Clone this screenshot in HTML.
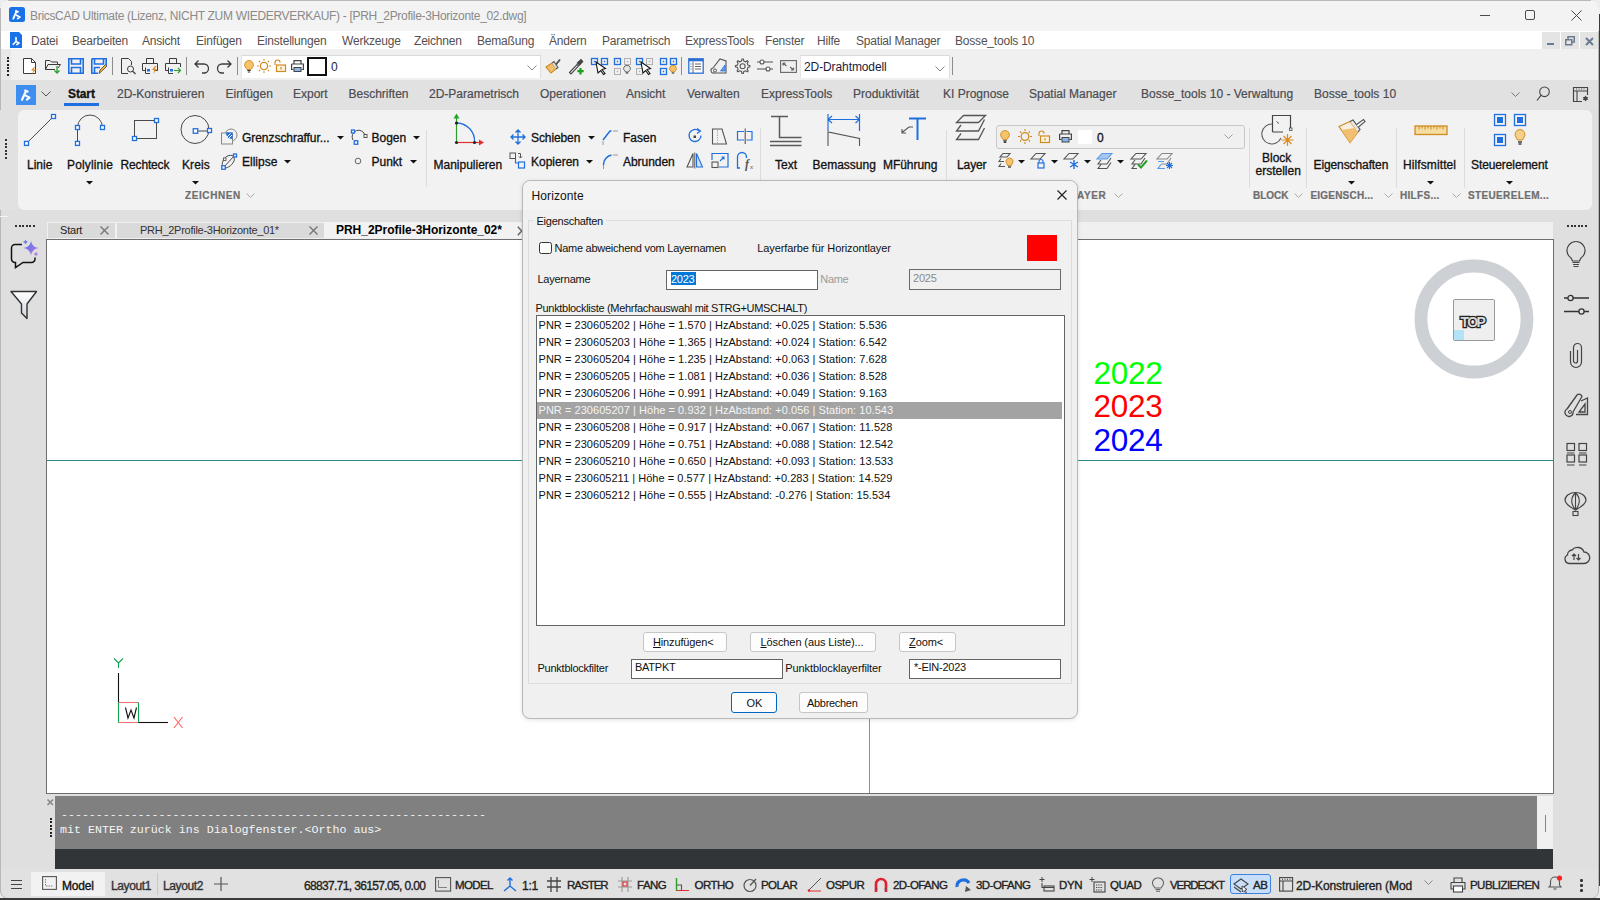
<!DOCTYPE html><html><head><meta charset="utf-8"><style>
html,body{margin:0;padding:0;width:1600px;height:900px;overflow:hidden;background:#ececec;}
body{position:relative;font-family:'Liberation Sans',sans-serif;}
.t{position:absolute;line-height:1;white-space:pre;}
.r{position:absolute;}
.s{position:absolute;overflow:visible;}
</style></head><body>
<div class="r" style="left:0px;top:0px;width:1599px;height:899px;background:#dfdfdf;border-radius:8px;overflow:hidden;border:1px solid #b8b8b8;box-sizing:border-box;"></div>
<div class="r" style="left:0px;top:0px;width:1599px;height:31px;background:#f3f3f3;border-radius:8px 8px 0 0;"></div>
<div class="r" style="left:8px;top:0px;width:1583px;height:1px;background:#b9b9b9;"></div>
<div class="r" style="left:1px;top:31px;width:1597px;height:18px;background:#ffffff;"></div>
<div class="r" style="left:1px;top:49px;width:1597px;height:31px;background:#f0f0f0;"></div>
<div class="r" style="left:1px;top:80px;width:1597px;height:30px;background:#e1e1e1;"></div>
<div class="r" style="left:18px;top:110px;width:1574px;height:100px;background:#f2f2f2;border-radius:6px;"></div>
<div class="r" style="left:1px;top:210px;width:1597px;height:659px;background:#dfdfdf;"></div>
<div class="r" style="left:46px;top:239px;width:1508px;height:555px;background:#ffffff;border:1px solid #6e6e6e;box-sizing:border-box;"></div>
<div class="r" style="left:55px;top:796px;width:1482px;height:53px;background:#808080;"></div>
<div class="r" style="left:1537px;top:796px;width:16px;height:53px;background:#f0f0f0;"></div>
<div class="r" style="left:55px;top:849px;width:1498px;height:20px;background:#323538;"></div>
<div class="r" style="left:1px;top:869px;width:1597px;height:29px;background:#e1e1e1;border-radius:0 0 8px 8px;"></div>
<div class="r" style="left:9px;top:7px;width:15.5px;height:15px;background:#1a72e8;border-radius:2.5px;"></div>
<svg class="s" style="left:9px;top:7px;" width="15" height="15" viewBox="0 0 15 15"><path d="M4.3 11.6 L7.6 4.2 M6.9 3.9 L8.9 4.8" fill="none" stroke="#fff" stroke-width="1.9" stroke-linecap="round"/><path d="M7.4 8.2 L10.9 10.1 L8.6 11.6" fill="none" stroke="#fff" stroke-width="1.7" stroke-linejoin="round" stroke-linecap="round"/></svg>
<div class="t" style="left:30px;top:9.8px;font-size:12px;color:#8a8a8a;letter-spacing:-0.31px;">BricsCAD Ultimate (Lizenz, NICHT ZUM WIEDERVERKAUF) - [PRH_2Profile-3Horizonte_02.dwg]</div>
<div class="r" style="left:1480px;top:15px;width:10px;height:1px;background:#4a4a4a;"></div>
<div class="r" style="left:1525px;top:10px;width:10px;height:10px;border:1px solid #4a4a4a;box-sizing:border-box;border-radius:2px;"></div>
<svg class="s" style="left:1571px;top:10px;" width="11" height="11" viewBox="0 0 11 11"><path d="M0.5 0.5 L10.5 10.5 M10.5 0.5 L0.5 10.5" stroke="#4a4a4a" stroke-width="1"/></svg>
<div class="r" style="left:1598.5px;top:14px;width:1.5px;height:872px;background:#3a3a3a;"></div>
<div class="r" style="left:0px;top:8px;width:1px;height:884px;background:#b8b8b8;"></div>
<div class="r" style="left:0px;top:898px;width:1600px;height:2px;background:#3a3a3a;"></div>
<svg class="s" style="left:10px;top:32px;" width="12" height="16" viewBox="0 0 12 16"><path d="M0 0 H9 L12 3 V16 H0 Z" fill="#1a72e8"/><path d="M6 5.5 V9.5 L3.3 12.3 M6 9.5 L9 11 L6.8 12.6" fill="none" stroke="#fff" stroke-width="1.6" stroke-linecap="round" stroke-linejoin="round"/></svg>
<div class="t" style="left:31px;top:34.8px;font-size:12px;color:#555050;letter-spacing:-0.2px;">Datei</div>
<div class="t" style="left:72px;top:34.8px;font-size:12px;color:#555050;letter-spacing:-0.2px;">Bearbeiten</div>
<div class="t" style="left:142px;top:34.8px;font-size:12px;color:#555050;letter-spacing:-0.2px;">Ansicht</div>
<div class="t" style="left:196px;top:34.8px;font-size:12px;color:#555050;letter-spacing:-0.2px;">Einfügen</div>
<div class="t" style="left:257px;top:34.8px;font-size:12px;color:#555050;letter-spacing:-0.2px;">Einstellungen</div>
<div class="t" style="left:342px;top:34.8px;font-size:12px;color:#555050;letter-spacing:-0.2px;">Werkzeuge</div>
<div class="t" style="left:414px;top:34.8px;font-size:12px;color:#555050;letter-spacing:-0.2px;">Zeichnen</div>
<div class="t" style="left:477px;top:34.8px;font-size:12px;color:#555050;letter-spacing:-0.2px;">Bemaßung</div>
<div class="t" style="left:549px;top:34.8px;font-size:12px;color:#555050;letter-spacing:-0.2px;">Ändern</div>
<div class="t" style="left:602px;top:34.8px;font-size:12px;color:#555050;letter-spacing:-0.2px;">Parametrisch</div>
<div class="t" style="left:685px;top:34.8px;font-size:12px;color:#555050;letter-spacing:-0.2px;">ExpressTools</div>
<div class="t" style="left:765px;top:34.8px;font-size:12px;color:#555050;letter-spacing:-0.2px;">Fenster</div>
<div class="t" style="left:817px;top:34.8px;font-size:12px;color:#555050;letter-spacing:-0.2px;">Hilfe</div>
<div class="t" style="left:856px;top:34.8px;font-size:12px;color:#555050;letter-spacing:-0.2px;">Spatial Manager</div>
<div class="t" style="left:955px;top:34.8px;font-size:12px;color:#555050;letter-spacing:-0.2px;">Bosse_tools 10</div>
<div class="r" style="left:1542px;top:32px;width:18px;height:17px;background:#e4e4e4;"></div>
<div class="r" style="left:1561px;top:32px;width:18px;height:17px;background:#e4e4e4;"></div>
<div class="r" style="left:1580px;top:32px;width:18px;height:17px;background:#e4e4e4;"></div>
<div class="r" style="left:1547px;top:43px;width:7px;height:2px;background:#6b7b92;"></div>
<svg class="s" style="left:1565px;top:36px;" width="10" height="10" viewBox="0 0 10 10"><rect x="0.75" y="3.75" width="6" height="5" fill="none" stroke="#6b7b92" stroke-width="1.5"/><path d="M3 3.5 V0.75 H9.25 V6 H7" fill="none" stroke="#6b7b92" stroke-width="1.5"/></svg>
<svg class="s" style="left:1585px;top:37px;" width="9" height="9" viewBox="0 0 9 9"><path d="M1 1 L8 8 M8 1 L1 8" stroke="#6b7b92" stroke-width="2"/></svg>
<div class="r" style="left:1px;top:49px;width:10px;height:31px;background:#e8e8e8;"></div>
<div class="r" style="left:7px;top:57.0px;width:2px;height:2px;background:#222;"></div>
<div class="r" style="left:7px;top:60.3px;width:2px;height:2px;background:#222;"></div>
<div class="r" style="left:7px;top:63.6px;width:2px;height:2px;background:#222;"></div>
<div class="r" style="left:7px;top:66.9px;width:2px;height:2px;background:#222;"></div>
<div class="r" style="left:7px;top:70.2px;width:2px;height:2px;background:#222;"></div>
<div class="r" style="left:7px;top:73.5px;width:2px;height:2px;background:#222;"></div>
<svg class="s" style="left:22px;top:58px;" width="16" height="16" viewBox="0 0 16 16"><path d="M1.5 0.5 H9.5 L13.5 4.5 V15.5 H1.5Z" fill="#fff" stroke="#3c3c3c"/><path d="M9.5 0.5 V4.5 H13.5" fill="none" stroke="#3c3c3c"/><path d="M12 9 L9 12.5 H11.5 L10 16 L14 11.5 H11.5 L13 9Z" fill="#e08a1e"/></svg>
<svg class="s" style="left:45px;top:58px;" width="16" height="16" viewBox="0 0 16 16"><path d="M0.5 2.5 H5 L6.5 4 H12.5 V6" fill="none" stroke="#3c3c3c"/><path d="M0.5 2.5 V11.5 H10" fill="none" stroke="#3c3c3c"/><path d="M0.5 11.5 L3 6.5 H15.5 L13 10" fill="none" stroke="#3c3c3c"/><path d="M12 8 V15 M9.5 12.5 L12 15 L14.5 12.5" fill="none" stroke="#2aa02a" stroke-width="1.3"/></svg>
<svg class="s" style="left:68px;top:58px;" width="16" height="16" viewBox="0 0 16 16"><path d="M0.8 0.8 H15.2 V15.2 H0.8Z M3.5 0.8 V6 H12.5 V0.8 M3.5 15.2 V9.5 H12.5 V15.2" fill="none" stroke="#1f6fe0" stroke-width="1.6"/></svg>
<svg class="s" style="left:91px;top:58px;" width="16" height="16" viewBox="0 0 16 16"><path d="M0.8 0.8 H15.2 V8 M0.8 0.8 V15.2 H7 M3.5 0.8 V6 H12.5 V0.8 M3.5 15.2 V9.5 H9" fill="none" stroke="#1f6fe0" stroke-width="1.6"/><path d="M8 15.5 L9 12 L14.5 6.5 L16 8 L10.5 13.5Z" fill="#f0b030" stroke="#444" stroke-width="0.8"/></svg>
<div class="r" style="left:112px;top:57px;width:1px;height:18px;background:#8c8c8c;"></div>
<svg class="s" style="left:120px;top:58px;" width="16" height="16" viewBox="0 0 16 16"><path d="M1.5 0.5 H8.5 L11.5 3.5 V7 M1.5 0.5 V15.5 H8" fill="none" stroke="#3c3c3c"/><circle cx="10.5" cy="11" r="3" fill="none" stroke="#3c3c3c"/><path d="M12.6 13.1 L15.5 16" stroke="#3c3c3c" stroke-width="1.3"/></svg>
<svg class="s" style="left:142px;top:58px;" width="16" height="16" viewBox="0 0 16 16"><path d="M4.5 5.5 V0.5 H11.5 V5.5 M0.5 5.5 H15.5 V12.5 H12.5 M0.5 5.5 V12.5 H3.5 M3.5 9.5 V15.5 H8" fill="none" stroke="#3c3c3c"/><rect x="5" y="11" width="3" height="2.5" fill="#1f6fe0"/><path d="M13 8 L10 12 H12.5 L11 16 L15 11 H12.5 L14.5 8Z" fill="#e08a1e"/></svg>
<svg class="s" style="left:165px;top:58px;" width="16" height="16" viewBox="0 0 16 16"><path d="M4.5 5.5 V0.5 H11.5 V5.5 M0.5 5.5 H15.5 V9 M0.5 5.5 V12.5 H3.5 M3.5 9.5 V15.5 H8" fill="none" stroke="#3c3c3c"/><rect x="5" y="11" width="3" height="2.5" fill="#1f6fe0"/><path d="M9 12.5 H15.5 M13 10 L15.5 12.5 L13 15" fill="none" stroke="#2aa02a" stroke-width="1.2"/></svg>
<div class="r" style="left:186px;top:57px;width:1px;height:18px;background:#8c8c8c;"></div>
<svg class="s" style="left:194px;top:59px;" width="16" height="14" viewBox="0 0 16 14"><path d="M1 5 H10 A4.5 4.5 0 0 1 10 14 H8 M4.5 1.5 L1 5 L4.5 8.5" fill="none" stroke="#3c3c3c" stroke-width="1.3"/></svg>
<svg class="s" style="left:216px;top:59px;" width="16" height="14" viewBox="0 0 16 14"><path d="M15 5 H6 A4.5 4.5 0 0 0 6 14 H8 M11.5 1.5 L15 5 L11.5 8.5" fill="none" stroke="#3c3c3c" stroke-width="1.3"/></svg>
<div class="r" style="left:237px;top:57px;width:1px;height:18px;background:#8c8c8c;"></div>
<div class="r" style="left:241px;top:55px;width:300px;height:23px;background:#ffffff;border-top:1px solid #dadada;border-left:1px solid #e5e5e5;box-sizing:border-box;"></div>
<svg class="s" style="left:244px;top:60px;" width="10" height="13" viewBox="0 0 10 13"><path d="M5 0.5 A4.3 4.3 0 0 1 8 8 L7 9.5 H3 L2 8 A4.3 4.3 0 0 1 5 0.5Z" fill="#f5c36a" stroke="#d08a20" stroke-width="0.9"/><path d="M3.3 10.5 H6.7 M3.8 12 H6.2" stroke="#333" stroke-width="1.2"/></svg>
<svg class="s" style="left:257px;top:59px;" width="14" height="14" viewBox="0 0 14 14"><circle cx="7" cy="7" r="3.6" fill="none" stroke="#d08a20" stroke-width="1.3"/><path d="M7 0 V1.8 M7 12.2 V14 M0 7 H1.8 M12.2 7 H14 M2 2 L3.2 3.2 M10.8 10.8 L12 12 M2 12 L3.2 10.8 M10.8 3.2 L12 2" stroke="#d08a20" stroke-width="1.1"/></svg>
<svg class="s" style="left:274px;top:59px;" width="12" height="13" viewBox="0 0 12 13"><path d="M1 6 V3.5 A2.5 2.5 0 0 1 6 3.5 V2" fill="none" stroke="#d08a20" stroke-width="1.1"/><rect x="2.5" y="6" width="9" height="6.5" fill="#fdf3df" stroke="#d08a20" stroke-width="1.2"/><path d="M7 8 V10.5" stroke="#d08a20" stroke-width="1.2"/></svg>
<svg class="s" style="left:291px;top:60px;" width="13" height="12" viewBox="0 0 13 12"><path d="M3 4 V0.6 H10 V4 M0.6 4 H12.4 V9.5 H10.5 M0.6 4 V9.5 H2.5" fill="none" stroke="#444" stroke-width="1.2"/><rect x="3" y="7.5" width="7" height="4" fill="#8ab4e8" stroke="#444" stroke-width="1"/></svg>
<div class="r" style="left:307px;top:57px;width:20px;height:19px;background:#fff;border:2px solid #111;box-sizing:border-box;"></div>
<div class="t" style="left:331px;top:60.8px;font-size:12px;color:#1b1b50;">0</div>
<svg class="s" style="left:527px;top:65px;" width="10" height="6" viewBox="0 0 10 6"><path d="M0.5 0.5 L5 5 L9.5 0.5" fill="none" stroke="#888" stroke-width="1"/></svg>
<div class="r" style="left:540px;top:55px;width:1px;height:23px;background:#dedede;"></div>
<svg class="s" style="left:545px;top:58px;" width="17" height="16" viewBox="0 0 17 16"><path d="M1 9 L7 5 L11 11 L6 15Z" fill="#f0c070" stroke="#d08a20" stroke-width="1.1"/><path d="M7 5 L9 3.5 L13 9.5 L11 11" fill="#ddd" stroke="#555" stroke-width="1.1"/><path d="M11 6.5 L15 1.5" stroke="#555" stroke-width="2"/></svg>
<svg class="s" style="left:568px;top:58px;" width="16" height="17" viewBox="0 0 16 17"><path d="M1.5 14.5 L9 6.5 L10.5 8 L3 16Z" fill="#fff" stroke="#444" stroke-width="1.1"/><path d="M8.5 5 L13 0.8 L15.5 3.5 L11.5 8Z" fill="#444"/><path d="M12.5 10 V16.5 M9.3 13.2 H15.7" stroke="#1aa01a" stroke-width="2.2"/></svg>
<svg class="s" style="left:591px;top:58px;" width="17" height="17" viewBox="0 0 17 17"><rect x="0.5" y="0.5" width="6" height="6" fill="none" stroke="#1f6fe0" stroke-width="1.3"/><rect x="2.8" y="2.8" width="1.4" height="1.4" fill="#1f6fe0"/><rect x="10.5" y="0.5" width="6" height="6" fill="none" stroke="#1f6fe0" stroke-width="1.3"/><rect x="12.8" y="2.8" width="1.4" height="1.4" fill="#1f6fe0"/><path d="M5 4 L14.5 10.5 L11 11.5 L14 15.5 L12.5 16.5 L9.7 12.5 L7 15Z" fill="#fff" stroke="#111" stroke-width="1.1"/></svg>
<svg class="s" style="left:614px;top:58px;" width="17" height="17" viewBox="0 0 17 17"><rect x="0.5" y="0.5" width="6" height="6" fill="none" stroke="#1f6fe0" stroke-width="1.3"/><rect x="2.8" y="2.8" width="1.4" height="1.4" fill="#1f6fe0"/><rect x="10.5" y="0.5" width="6" height="6" fill="none" stroke="#b0b0b0" stroke-width="1"/><rect x="12.8" y="2.8" width="1.4" height="1.4" fill="#b0b0b0"/><rect x="0.5" y="10.5" width="6" height="6" fill="none" stroke="#b0b0b0" stroke-width="1"/><rect x="2.8" y="12.8" width="1.4" height="1.4" fill="#b0b0b0"/><path d="M13 7.5 A3 3 0 0 1 15 13 L14.5 14 H11.5 L11 13 A3 3 0 0 1 13 7.5Z" fill="#e8e8e8" stroke="#555" stroke-width="0.9"/><path d="M11.8 15 H14.2" stroke="#444" stroke-width="1.2"/></svg>
<svg class="s" style="left:636px;top:58px;" width="17" height="17" viewBox="0 0 17 17"><rect x="0.5" y="0.5" width="6" height="6" fill="none" stroke="#1f6fe0" stroke-width="1.3"/><rect x="2.8" y="2.8" width="1.4" height="1.4" fill="#1f6fe0"/><rect x="10.5" y="0.5" width="6" height="6" fill="none" stroke="#b0b0b0" stroke-width="1"/><rect x="12.8" y="2.8" width="1.4" height="1.4" fill="#b0b0b0"/><rect x="0.5" y="10.5" width="6" height="6" fill="none" stroke="#b0b0b0" stroke-width="1"/><rect x="2.8" y="12.8" width="1.4" height="1.4" fill="#b0b0b0"/><path d="M5 4 L14.5 10.5 L11 11.5 L14 15.5 L12.5 16.5 L9.7 12.5 L7 15Z" fill="#fff" stroke="#111" stroke-width="1.1"/></svg>
<svg class="s" style="left:660px;top:58px;" width="17" height="17" viewBox="0 0 17 17"><rect x="0.5" y="0.5" width="6" height="6" fill="none" stroke="#1f6fe0" stroke-width="1.3"/><rect x="2.8" y="2.8" width="1.4" height="1.4" fill="#1f6fe0"/><rect x="10.5" y="0.5" width="6" height="6" fill="none" stroke="#1f6fe0" stroke-width="1.3"/><rect x="12.8" y="2.8" width="1.4" height="1.4" fill="#1f6fe0"/><rect x="0.5" y="10.5" width="6" height="6" fill="none" stroke="#1f6fe0" stroke-width="1.3"/><rect x="2.8" y="12.8" width="1.4" height="1.4" fill="#1f6fe0"/><path d="M13 7.5 A3 3 0 0 1 15 13 L14.5 14 H11.5 L11 13 A3 3 0 0 1 13 7.5Z" fill="#f5c36a" stroke="#d08a20" stroke-width="0.9"/><path d="M11.8 15 H14.2" stroke="#444" stroke-width="1.2"/></svg>
<div class="r" style="left:681px;top:57px;width:1px;height:18px;background:#8c8c8c;"></div>
<svg class="s" style="left:688px;top:58px;" width="16" height="16" viewBox="0 0 16 16"><rect x="0.8" y="0.8" width="14.4" height="14.4" fill="#fff" stroke="#2b6fd6" stroke-width="1.3"/><rect x="0.8" y="0.8" width="14.4" height="2.5" fill="#2b6fd6"/><path d="M5 3.5 V15 M7 6 H13 M7 8.5 H13 M7 11 H13" stroke="#555" stroke-width="0.9"/><path d="M2.5 6 H3.5 M2.5 8.5 H3.5 M2.5 11 H3.5" stroke="#2b6fd6" stroke-width="1"/></svg>
<svg class="s" style="left:711px;top:58px;" width="17" height="16" viewBox="0 0 17 16"><path d="M2 10 L9 1 L15 3 V15 H3 A2.5 2.5 0 0 1 2 10Z" fill="none" stroke="#555" stroke-width="1.1"/><path d="M14 7 L9.5 13 H14Z" fill="#6aa0e8" stroke="#1f6fe0" stroke-width="0.8"/><circle cx="4" cy="12.5" r="1.5" fill="none" stroke="#555"/></svg>
<svg class="s" style="left:734px;top:58px;" width="16" height="16" viewBox="0 0 16 16"><path d="M8 1 L9.3 1 L9.8 3 L11.5 3.8 L13.3 2.7 L14.2 3.6 L13.2 5.4 L13.9 7.1 L15.9 7.6 V8.9 L13.9 9.4 L13.2 11.1 L14.2 12.9 L13.3 13.8 L11.5 12.8 L9.8 13.5 L9.3 15.5 H8 L7.5 13.5 L5.8 12.8 L4 13.8 L3.1 12.9 L4.1 11.1 L3.4 9.4 L1.4 8.9 V7.6 L3.4 7.1 L4.1 5.4 L3.1 3.6 L4 2.7 L5.8 3.8 L7.5 3Z" fill="none" stroke="#555" stroke-width="1.1"/><circle cx="8.6" cy="8.3" r="2.5" fill="none" stroke="#555" stroke-width="1.1"/></svg>
<svg class="s" style="left:757px;top:59px;" width="16" height="14" viewBox="0 0 16 14"><path d="M0 3 H16 M0 10 H16" stroke="#555" stroke-width="1.1"/><circle cx="5" cy="3" r="2" fill="#fff" stroke="#555" stroke-width="1.1"/><circle cx="11" cy="10" r="2" fill="#fff" stroke="#555" stroke-width="1.1"/></svg>
<svg class="s" style="left:780px;top:60px;" width="17" height="13" viewBox="0 0 17 13"><rect x="0.6" y="0.6" width="15.8" height="11.8" fill="none" stroke="#666" stroke-width="1.1"/><path d="M3 3 L6.5 6 M3 3 H5.5 M3 3 V5.5 M13.5 10 L10 7 M13.5 10 H11 M13.5 10 V7.5" stroke="#666" stroke-width="1.2"/></svg>
<div class="r" style="left:800px;top:55px;width:150px;height:23px;background:#ffffff;border-top:1px solid #dadada;border-left:1px solid #e5e5e5;box-sizing:border-box;"></div>
<div class="t" style="left:804px;top:60.8px;font-size:12px;color:#1b1b3a;letter-spacing:-0.1px;">2D-Drahtmodell</div>
<svg class="s" style="left:935px;top:66px;" width="10" height="6" viewBox="0 0 10 6"><path d="M0.5 0.5 L5 5 L9.5 0.5" fill="none" stroke="#888" stroke-width="1"/></svg>
<div class="r" style="left:949px;top:55px;width:1px;height:23px;background:#dedede;"></div>
<div class="r" style="left:952px;top:57px;width:1px;height:18px;background:#8c8c8c;"></div>
<div class="r" style="left:16px;top:85px;width:20px;height:20px;background:#3d8ef0;"></div>
<svg class="s" style="left:16px;top:85px;" width="20" height="20" viewBox="0 0 20 20"><path d="M6 14.8 L10 6 M9.2 5.6 L11.6 6.6" fill="none" stroke="#fff" stroke-width="2.2" stroke-linecap="round"/><path d="M9.3 10.3 L13.6 12.6 L10.8 14.6" fill="none" stroke="#fff" stroke-width="2" stroke-linejoin="round" stroke-linecap="round"/></svg>
<svg class="s" style="left:41px;top:91px;" width="10" height="6" viewBox="0 0 10 6"><path d="M0.5 0.5 L5 5 L9.5 0.5" fill="none" stroke="#555" stroke-width="1"/></svg>
<div class="t" style="left:68px;top:87.8px;font-size:12px;color:#111;font-weight:bold;letter-spacing:-0.1px;-webkit-text-stroke:0.3px #111;">Start</div>
<div class="r" style="left:64px;top:103px;width:35px;height:2.5px;background:#1f6fe0;"></div>
<div class="t" style="left:117px;top:87.8px;font-size:12px;color:#4b4c52;-webkit-text-stroke:0.2px #4b4c52;">2D-Konstruieren</div>
<div class="t" style="left:225.5px;top:87.8px;font-size:12px;color:#4b4c52;-webkit-text-stroke:0.2px #4b4c52;">Einfügen</div>
<div class="t" style="left:293px;top:87.8px;font-size:12px;color:#4b4c52;-webkit-text-stroke:0.2px #4b4c52;">Export</div>
<div class="t" style="left:348.5px;top:87.8px;font-size:12px;color:#4b4c52;-webkit-text-stroke:0.2px #4b4c52;">Beschriften</div>
<div class="t" style="left:429px;top:87.8px;font-size:12px;color:#4b4c52;-webkit-text-stroke:0.2px #4b4c52;">2D-Parametrisch</div>
<div class="t" style="left:540px;top:87.8px;font-size:12px;color:#4b4c52;-webkit-text-stroke:0.2px #4b4c52;">Operationen</div>
<div class="t" style="left:626px;top:87.8px;font-size:12px;color:#4b4c52;-webkit-text-stroke:0.2px #4b4c52;">Ansicht</div>
<div class="t" style="left:687px;top:87.8px;font-size:12px;color:#4b4c52;-webkit-text-stroke:0.2px #4b4c52;">Verwalten</div>
<div class="t" style="left:761px;top:87.8px;font-size:12px;color:#4b4c52;-webkit-text-stroke:0.2px #4b4c52;">ExpressTools</div>
<div class="t" style="left:853px;top:87.8px;font-size:12px;color:#4b4c52;-webkit-text-stroke:0.2px #4b4c52;">Produktivität</div>
<div class="t" style="left:943px;top:87.8px;font-size:12px;color:#4b4c52;-webkit-text-stroke:0.2px #4b4c52;">KI Prognose</div>
<div class="t" style="left:1029px;top:87.8px;font-size:12px;color:#4b4c52;-webkit-text-stroke:0.2px #4b4c52;">Spatial Manager</div>
<div class="t" style="left:1141px;top:87.8px;font-size:12px;color:#4b4c52;-webkit-text-stroke:0.2px #4b4c52;">Bosse_tools 10 - Verwaltung</div>
<div class="t" style="left:1314px;top:87.8px;font-size:12px;color:#4b4c52;-webkit-text-stroke:0.2px #4b4c52;">Bosse_tools 10</div>
<svg class="s" style="left:1511px;top:92px;" width="9" height="5" viewBox="0 0 9 5"><path d="M0.5 0.5 L4.5 4.5 L8.5 0.5" fill="none" stroke="#777" stroke-width="1"/></svg>
<svg class="s" style="left:1536px;top:86px;" width="16" height="16" viewBox="0 0 16 16"><circle cx="8.5" cy="5.8" r="4.8" fill="none" stroke="#444" stroke-width="1.1"/><path d="M5.2 9.2 L1 14.5" stroke="#444" stroke-width="1.2"/></svg>
<svg class="s" style="left:1572px;top:86px;" width="18" height="17" viewBox="0 0 18 17"><path d="M10 15.5 H1.5 V1.5 H15.5 V9" fill="none" stroke="#444" stroke-width="1.2"/><path d="M1.5 5 H15.5 M5 5 V15.5" stroke="#444" stroke-width="1.1"/><path d="M4 3 H5 M6.5 3 H7.5 M9 3 H10 M11.5 3 H12.5" stroke="#444" stroke-width="1.2"/><path d="M13.5 9.5 L14.5 11 H16.2 L15.3 12.5 L16.2 14 H14.5 L13.5 15.5 L12.5 14 H10.8 L11.7 12.5 L10.8 11 H12.5Z" fill="#444"/></svg>
<svg class="s" style="left:20px;top:110px;" width="45" height="40" viewBox="0 0 45 40"><path d="M6.5 33.4 L33.5 6.5" stroke="#4a4a4a" stroke-width="1"/><rect x="4.5" y="31.4" width="4" height="4" fill="#fff" stroke="#1f6fe0" stroke-width="1.3"/><rect x="31.5" y="4.5" width="4" height="4" fill="#fff" stroke="#1f6fe0" stroke-width="1.3"/></svg>
<svg class="s" style="left:70px;top:110px;" width="40" height="40" viewBox="0 0 40 40"><path d="M7.5 33.4 V17.5 A12.5 12.5 0 0 1 32.5 17.5" fill="none" stroke="#4a4a4a" stroke-width="1"/><rect x="5.5" y="31.4" width="4" height="4" fill="#fff" stroke="#1f6fe0" stroke-width="1.3"/><rect x="5.5" y="15.5" width="4" height="4" fill="#fff" stroke="#1f6fe0" stroke-width="1.3"/><rect x="30.5" y="15.5" width="4" height="4" fill="#fff" stroke="#1f6fe0" stroke-width="1.3"/></svg>
<svg class="s" style="left:125px;top:110px;" width="40" height="40" viewBox="0 0 40 40"><rect x="9.5" y="10.5" width="22" height="18" fill="none" stroke="#4a4a4a" stroke-width="1"/><rect x="7.5" y="26.5" width="4" height="4" fill="#fff" stroke="#1f6fe0" stroke-width="1.3"/><rect x="29.5" y="8.5" width="4" height="4" fill="#fff" stroke="#1f6fe0" stroke-width="1.3"/></svg>
<svg class="s" style="left:175px;top:110px;" width="45" height="40" viewBox="0 0 45 40"><circle cx="20" cy="19.5" r="14" fill="none" stroke="#4a4a4a" stroke-width="1"/><path d="M20.5 21 H34.5" stroke="#4a4a4a"/><rect x="18.25" y="18.75" width="4.5" height="4.5" fill="#fff" stroke="#1f6fe0" stroke-width="1.3"/><rect x="32.5" y="18.5" width="4" height="4" fill="#fff" stroke="#1f6fe0" stroke-width="1.3"/></svg>
<div class="t" style="left:27px;top:158.8px;font-size:12px;color:#111;-webkit-text-stroke:0.3px #111;">Linie</div>
<div class="t" style="left:67px;top:158.8px;font-size:12px;color:#111;letter-spacing:0.15px;-webkit-text-stroke:0.3px #111;">Polylinie</div>
<div class="t" style="left:120.5px;top:158.8px;font-size:12px;color:#111;letter-spacing:-0.15px;-webkit-text-stroke:0.3px #111;">Rechteck</div>
<div class="t" style="left:182px;top:158.8px;font-size:12px;color:#111;letter-spacing:0.1px;-webkit-text-stroke:0.3px #111;">Kreis</div>
<svg class="s" style="left:86.0px;top:180.5px;" width="7" height="4" viewBox="0 0 7 4"><path d="M0 0 H7 L3.5 3.5Z" fill="#111"/></svg>
<svg class="s" style="left:192.0px;top:180.5px;" width="7" height="4" viewBox="0 0 7 4"><path d="M0 0 H7 L3.5 3.5Z" fill="#111"/></svg>
<div class="t" style="left:185px;top:190.5px;font-size:10px;color:#6e6e6e;font-weight:bold;letter-spacing:0.6px;-webkit-text-stroke:0.2px #6e6e6e;">ZEICHNEN</div>
<svg class="s" style="left:246px;top:193px;" width="9" height="5" viewBox="0 0 9 5"><path d="M0.5 0.5 L4.5 4.5 L8.5 0.5" fill="none" stroke="#aaa" stroke-width="1"/></svg>
<svg class="s" style="left:220px;top:128px;" width="18" height="18" viewBox="0 0 18 18"><circle cx="11" cy="7" r="6" fill="none" stroke="#888" stroke-width="1"/><rect x="1.5" y="5" width="11" height="11" fill="#f2f2f2" stroke="#888" stroke-width="1"/><path d="M6 4.5 H12.5 V11 A6 6 0 0 1 6 4.5Z" fill="#1f6fe0"/><path d="M7 9 L10.5 5.5 M8.5 10.5 L12 7" stroke="#fff" stroke-width="1"/></svg>
<div class="t" style="left:242px;top:131.8px;font-size:12px;color:#111;letter-spacing:-0.05px;-webkit-text-stroke:0.3px #111;">Grenzschraffur...</div>
<svg class="s" style="left:336.5px;top:135.5px;" width="7" height="4" viewBox="0 0 7 4"><path d="M0 0 H7 L3.5 3.5Z" fill="#111"/></svg>
<svg class="s" style="left:350px;top:128px;" width="18" height="18" viewBox="0 0 18 18"><path d="M3 12 A6.5 6.5 0 1 1 15 7.5" fill="none" stroke="#4a4a4a" stroke-width="1"/><rect x="1.5" y="2.0" width="3" height="3" fill="#fff" stroke="#1f6fe0" stroke-width="1.3"/><rect x="4.25" y="12.75" width="3.5" height="3.5" fill="#fff" stroke="#1f6fe0" stroke-width="1.3"/><rect x="14" y="6.5" width="3" height="3" fill="#fff" stroke="#555" stroke-width="1"/></svg>
<div class="t" style="left:371.5px;top:131.8px;font-size:12px;color:#111;-webkit-text-stroke:0.3px #111;">Bogen</div>
<svg class="s" style="left:412.5px;top:135.5px;" width="7" height="4" viewBox="0 0 7 4"><path d="M0 0 H7 L3.5 3.5Z" fill="#111"/></svg>
<svg class="s" style="left:220px;top:153px;" width="18" height="18" viewBox="0 0 18 18"><path d="M3 15 C1 11 3 4 9 2.5 C14 1.5 15 5 14 8 C12 13 6 16 3 15Z" fill="none" stroke="#4a4a4a" stroke-width="1"/><path d="M3 15 L15 2" stroke="#4a4a4a" stroke-width="1"/><rect x="1.75" y="12.75" width="3.5" height="3.5" fill="#fff" stroke="#1f6fe0" stroke-width="1.3"/><rect x="13.5" y="1.0" width="3" height="3" fill="#fff" stroke="#1f6fe0" stroke-width="1.3"/><rect x="3.5" y="5" width="2.5" height="2.5" fill="#fff" stroke="#555" stroke-width="0.9"/></svg>
<div class="t" style="left:242px;top:155.8px;font-size:12px;color:#111;-webkit-text-stroke:0.3px #111;">Ellipse</div>
<svg class="s" style="left:283.5px;top:159.5px;" width="7" height="4" viewBox="0 0 7 4"><path d="M0 0 H7 L3.5 3.5Z" fill="#111"/></svg>
<svg class="s" style="left:353px;top:156px;" width="10" height="10" viewBox="0 0 10 10"><circle cx="5" cy="5" r="2.8" fill="none" stroke="#666" stroke-width="1"/></svg>
<div class="t" style="left:371.5px;top:155.8px;font-size:12px;color:#111;-webkit-text-stroke:0.3px #111;">Punkt</div>
<svg class="s" style="left:409.5px;top:159.5px;" width="7" height="4" viewBox="0 0 7 4"><path d="M0 0 H7 L3.5 3.5Z" fill="#111"/></svg>
<div class="r" style="left:426px;top:130px;width:1px;height:57px;background:#dcdcdc;"></div>
<svg class="s" style="left:448px;top:112px;" width="40" height="36" viewBox="0 0 40 36"><path d="M8.5 4 V30.5" stroke="#2aa02a" stroke-width="1.2"/><path d="M5.5 6.5 L8.5 1.5 L11.5 6.5Z" fill="#2aa02a"/><path d="M8.5 30.5 H33" stroke="#e03030" stroke-width="1.2"/><path d="M31 27.5 L36 30.5 L31 33.5Z" fill="#e03030"/><path d="M8.5 11 A18 18 0 0 1 26.5 30.5" fill="none" stroke="#1f6fe0" stroke-width="1.3"/><circle cx="8.5" cy="11" r="1.6" fill="#222"/><circle cx="8.5" cy="30.5" r="1.6" fill="#222"/><circle cx="26.5" cy="30.5" r="1.6" fill="#222"/></svg>
<div class="t" style="left:433.5px;top:158.8px;font-size:12px;color:#111;-webkit-text-stroke:0.3px #111;">Manipulieren</div>
<svg class="s" style="left:510px;top:129px;" width="16" height="16" viewBox="0 0 16 16"><path d="M8 1 V15 M1 8 H15 M5.5 3.5 L8 1 L10.5 3.5 M5.5 12.5 L8 15 L10.5 12.5 M3.5 5.5 L1 8 L3.5 10.5 M12.5 5.5 L15 8 L12.5 10.5" fill="none" stroke="#1f6fe0" stroke-width="1.3"/></svg>
<div class="t" style="left:531px;top:131.8px;font-size:12px;color:#111;letter-spacing:-0.1px;-webkit-text-stroke:0.3px #111;">Schieben</div>
<svg class="s" style="left:587.5px;top:135.5px;" width="7" height="4" viewBox="0 0 7 4"><path d="M0 0 H7 L3.5 3.5Z" fill="#111"/></svg>
<svg class="s" style="left:509px;top:152px;" width="17" height="17" viewBox="0 0 17 17"><rect x="1" y="1" width="5.5" height="5.5" fill="none" stroke="#555" stroke-width="1"/><path d="M9 1.5 H11.5 V6 M10 4.5 L11.5 6 L13 4.5" fill="none" stroke="#555"/><path d="M6.5 7 V11 H10" fill="none" stroke="#1f6fe0" stroke-width="1.1"/><rect x="9.5" y="10" width="6" height="6" fill="none" stroke="#1f6fe0" stroke-width="1.2"/></svg>
<div class="t" style="left:531px;top:155.8px;font-size:12px;color:#111;-webkit-text-stroke:0.3px #111;">Kopieren</div>
<svg class="s" style="left:585.5px;top:159.5px;" width="7" height="4" viewBox="0 0 7 4"><path d="M0 0 H7 L3.5 3.5Z" fill="#111"/></svg>
<svg class="s" style="left:601px;top:127px;" width="18" height="19" viewBox="0 0 18 19"><path d="M2 13 L9 4 H10.5" fill="none" stroke="#1f6fe0" stroke-width="1.5"/><path d="M12 4 H17 M2 14 V18" stroke="#999" stroke-width="1"/></svg>
<div class="t" style="left:623px;top:131.8px;font-size:12px;color:#111;-webkit-text-stroke:0.3px #111;">Fasen</div>
<svg class="s" style="left:601px;top:151px;" width="18" height="19" viewBox="0 0 18 19"><path d="M2.5 14 A10 10 0 0 1 10.5 4" fill="none" stroke="#1f6fe0" stroke-width="1.5"/><path d="M12 4 H17 M2.5 14 V18" stroke="#999" stroke-width="1"/></svg>
<div class="t" style="left:623px;top:155.8px;font-size:12px;color:#111;letter-spacing:-0.05px;-webkit-text-stroke:0.3px #111;">Abrunden</div>
<svg class="s" style="left:687px;top:128px;" width="16" height="16" viewBox="0 0 16 16"><path d="M12 3 A6 6 0 1 0 14 7.5" fill="none" stroke="#1f6fe0" stroke-width="1.3"/><path d="M10 0.5 L13.5 3 L10 5.5" fill="none" stroke="#1f6fe0" stroke-width="1.2"/><rect x="6.5" y="7.5" width="2.5" height="2.5" fill="#444"/></svg>
<svg class="s" style="left:711px;top:128px;" width="18" height="17" viewBox="0 0 18 17"><path d="M1.5 1 V16 H15.5 L11 1Z" fill="none" stroke="#555" stroke-width="1.1"/><path d="M6.5 2 V15" stroke="#999" stroke-dasharray="1.2 1.2" stroke-width="0.9"/></svg>
<svg class="s" style="left:736px;top:128px;" width="18" height="17" viewBox="0 0 18 17"><path d="M8 3.5 H1.5 V12 H8 M10.5 3.5 H16 V12 H10.5" fill="none" stroke="#1f6fe0" stroke-width="1.2"/><path d="M9.2 0.5 V16" stroke="#555" stroke-width="1.1"/></svg>
<svg class="s" style="left:686px;top:152px;" width="18" height="17" viewBox="0 0 18 17"><path d="M7 1.5 L1 15 H7Z" fill="none" stroke="#555" stroke-width="1.1"/><path d="M10.5 1.5 L16.5 15 H10.5Z" fill="#cfe0f8" stroke="#1f6fe0" stroke-width="1.1"/><path d="M8.8 0.5 V16.5" stroke="#555" stroke-width="1"/></svg>
<svg class="s" style="left:711px;top:152px;" width="18" height="17" viewBox="0 0 18 17"><path d="M1 8 V1.5 H17 V15 H8" fill="none" stroke="#1f6fe0" stroke-width="1.2"/><rect x="1" y="10" width="6" height="5.5" fill="none" stroke="#555" stroke-width="1.1"/><path d="M9 9 L13 5 M10.5 5 H13 V7.5" fill="none" stroke="#1f6fe0" stroke-width="1.1"/></svg>
<svg class="s" style="left:736px;top:151px;" width="19" height="19" viewBox="0 0 19 19"><path d="M4 17 H1.5 V6 A4.5 4.5 0 0 1 10.5 6 V7" fill="none" stroke="#1f6fe0" stroke-width="1.3"/><text x="9" y="17" font-family="Liberation Serif" font-style="italic" font-weight="bold" font-size="12" fill="#555">f</text><text x="14" y="18" font-family="Liberation Serif" font-style="italic" font-size="7" fill="#555">x</text></svg>
<div class="r" style="left:760px;top:128px;width:1px;height:60px;background:#dcdcdc;"></div>
<svg class="s" style="left:768px;top:113px;" width="36" height="36" viewBox="0 0 36 36"><path d="M3 3.5 H20 M11.5 3.5 V24.5 H33.5 M2 28.5 H33.5 M2 32.5 H33.5" fill="none" stroke="#5a5a5a" stroke-width="1.5"/></svg>
<div class="t" style="left:775px;top:158.8px;font-size:12px;color:#111;-webkit-text-stroke:0.3px #111;">Text</div>
<svg class="s" style="left:825px;top:112px;" width="38" height="36" viewBox="0 0 38 36"><path d="M3 2 V19 M34.5 2 V19 M3 7.5 H34.5 M7 4 L3 7.5 L7 11 M30.5 4 L34.5 7.5 L30.5 11" fill="none" stroke="#1f6fe0" stroke-width="1.2"/><path d="M3 34 V20 L34.5 26.5 V34" fill="none" stroke="#555" stroke-width="1.1"/></svg>
<div class="t" style="left:812.5px;top:158.8px;font-size:12px;color:#111;-webkit-text-stroke:0.3px #111;">Bemassung</div>
<svg class="s" style="left:898px;top:116px;" width="32" height="26" viewBox="0 0 32 26"><path d="M11 2.5 H28 M19.5 2.5 V24" stroke="#1f6fe0" stroke-width="2"/><path d="M15 11 H11 L4 16.5 M4 13 V17 H8" fill="none" stroke="#555" stroke-width="1.1"/></svg>
<div class="t" style="left:883px;top:158.8px;font-size:12px;color:#111;letter-spacing:-0.05px;-webkit-text-stroke:0.3px #111;">MFührung</div>
<div class="r" style="left:946px;top:130px;width:1px;height:57px;background:#dcdcdc;"></div>
<svg class="s" style="left:954px;top:114px;" width="36" height="32" viewBox="0 0 36 32"><path d="M9.5 1.5 H31.5 L24.5 8.5 H2.5Z" fill="none" stroke="#555" stroke-width="1.3"/><path d="M30.5 5.5 L24.5 17 H2.5 L7 11" fill="none" stroke="#555" stroke-width="1.3"/><path d="M30.5 14 L24.5 25.5 H2.5 L7 19.5" fill="none" stroke="#555" stroke-width="1.3"/></svg>
<div class="t" style="left:957px;top:158.8px;font-size:12px;color:#111;letter-spacing:-0.1px;-webkit-text-stroke:0.3px #111;">Layer</div>
<div class="r" style="left:995.5px;top:124.5px;width:249.5px;height:24px;background:#f0f0f0;border:1px solid #c8c8c8;box-sizing:border-box;border-radius:3px;"></div>
<svg class="s" style="left:1000px;top:130px;" width="10" height="14" viewBox="0 0 10 14"><path d="M5 0.5 A4.3 4.3 0 0 1 8 8 L7 9.5 H3 L2 8 A4.3 4.3 0 0 1 5 0.5Z" fill="#f5c36a" stroke="#d08a20" stroke-width="0.9"/><path d="M3.3 10.8 H6.7 M3.8 12.3 H6.2" stroke="#333" stroke-width="1.2"/></svg>
<svg class="s" style="left:1018px;top:129px;" width="14" height="15" viewBox="0 0 14 15"><circle cx="7" cy="7.5" r="3.8" fill="none" stroke="#d08a20" stroke-width="1.3"/><path d="M7 0 V2 M7 13 V15 M0 7.5 H2 M12 7.5 H14 M2 2.5 L3.3 3.8 M10.7 11.2 L12 12.5 M2 12.5 L3.3 11.2 M10.7 3.8 L12 2.5" stroke="#d08a20" stroke-width="1.1"/></svg>
<svg class="s" style="left:1038px;top:130px;" width="12" height="13" viewBox="0 0 12 13"><path d="M1 6 V3.5 A2.5 2.5 0 0 1 6 3.5 V2" fill="none" stroke="#d08a20" stroke-width="1.1"/><rect x="2.5" y="6" width="9" height="6.5" fill="#fdf3df" stroke="#d08a20" stroke-width="1.2"/><path d="M7 8 V10.5" stroke="#d08a20" stroke-width="1.2"/></svg>
<svg class="s" style="left:1059px;top:130px;" width="13" height="13" viewBox="0 0 13 13"><path d="M3 4 V0.6 H10 V4 M0.6 4 H12.4 V9.5 H10.5 M0.6 4 V9.5 H2.5" fill="none" stroke="#444" stroke-width="1.2"/><rect x="3" y="7.5" width="7" height="4.5" fill="#8ab4e8" stroke="#444" stroke-width="1"/></svg>
<div class="r" style="left:1078px;top:130px;width:14px;height:14px;background:#ffffff;"></div>
<div class="t" style="left:1097px;top:131.8px;font-size:12px;color:#111;-webkit-text-stroke:0.3px #111;">0</div>
<svg class="s" style="left:1224px;top:134px;" width="9" height="5" viewBox="0 0 9 5"><path d="M0.5 0.5 L4.5 4.5 L8.5 0.5" fill="none" stroke="#999" stroke-width="1"/></svg>
<svg class="s" style="left:997px;top:152px;" width="22" height="18" viewBox="0 0 22 18"><path d="M6 1.5 H13 L10 5 H3Z M4 6.5 L2 9.5 H7 M4 11.5 L2 14.5 H8" fill="none" stroke="#555" stroke-width="1.1"/><path d="M12.5 6 A3.5 3.5 0 0 1 15 12 L14.5 13.5 H10.5 L10 12 A3.5 3.5 0 0 1 12.5 6Z" fill="#f5c36a" stroke="#d08a20" stroke-width="0.9"/><path d="M11 15 H14" stroke="#333" stroke-width="1.3"/></svg>
<svg class="s" style="left:1017.5px;top:159.5px;" width="7" height="4" viewBox="0 0 7 4"><path d="M0 0 H7 L3.5 3.5Z" fill="#111"/></svg>
<svg class="s" style="left:1030px;top:152px;" width="22" height="18" viewBox="0 0 22 18"><path d="M6 1.5 H15 L10 7 H1Z" fill="none" stroke="#555" stroke-width="1.1"/><path d="M9 11 V9.5 A2 2 0 0 1 13 9.5 V11" fill="none" stroke="#1f6fe0" stroke-width="1.1"/><rect x="8" y="11" width="6" height="5" fill="none" stroke="#1f6fe0" stroke-width="1.2"/></svg>
<svg class="s" style="left:1050.5px;top:159.5px;" width="7" height="4" viewBox="0 0 7 4"><path d="M0 0 H7 L3.5 3.5Z" fill="#111"/></svg>
<svg class="s" style="left:1063px;top:152px;" width="22" height="18" viewBox="0 0 22 18"><path d="M6 1.5 H15 L10 7 H1Z" fill="none" stroke="#555" stroke-width="1.1"/><path d="M11 8 V17 M7 10 L15 15 M15 10 L7 15" stroke="#1f6fe0" stroke-width="1.4"/></svg>
<svg class="s" style="left:1083.5px;top:159.5px;" width="7" height="4" viewBox="0 0 7 4"><path d="M0 0 H7 L3.5 3.5Z" fill="#111"/></svg>
<svg class="s" style="left:1096px;top:152px;" width="22" height="18" viewBox="0 0 22 18"><path d="M6 1.5 H16 L11 7 H1Z" fill="#a8c8f0" stroke="#5a9ae8" stroke-width="1.1"/><path d="M15 6 L11 12 H2 L5 8 M15 10.5 L11 16.5 H2 L5 12.5" fill="none" stroke="#555" stroke-width="1.1"/></svg>
<svg class="s" style="left:1116.5px;top:159.5px;" width="7" height="4" viewBox="0 0 7 4"><path d="M0 0 H7 L3.5 3.5Z" fill="#111"/></svg>
<svg class="s" style="left:1130px;top:152px;" width="22" height="18" viewBox="0 0 22 18"><path d="M6 1.5 H16 L11 7 H1Z M15 6 L11 12 H2 L5 8 M5 12.5 L2 16.5 H7" fill="none" stroke="#555" stroke-width="1.1"/><path d="M8 12.5 L11 15.5 L17 8.5" fill="none" stroke="#2aa02a" stroke-width="2"/></svg>
<svg class="s" style="left:1156px;top:152px;" width="22" height="18" viewBox="0 0 22 18"><path d="M6 1.5 H16 L11 7 H1Z M15 6 L11 12 H5" fill="none" stroke="#888" stroke-width="1.1"/><path d="M5 12.5 L2 16.5 H9 M2 9.5 H8" fill="none" stroke="#5a9ae8" stroke-width="1.2"/><path d="M13.5 10 V17 M10 13.5 H17 M11 11 L16 16 M16 11 L11 16" stroke="#1f6fe0" stroke-width="1.1"/></svg>
<div class="t" style="left:1077px;top:190.5px;font-size:10px;color:#6e6e6e;font-weight:bold;letter-spacing:0.6px;-webkit-text-stroke:0.2px #6e6e6e;">AYER</div>
<svg class="s" style="left:1114px;top:193px;" width="9" height="5" viewBox="0 0 9 5"><path d="M0.5 0.5 L4.5 4.5 L8.5 0.5" fill="none" stroke="#aaa" stroke-width="1"/></svg>
<div class="r" style="left:1249px;top:128px;width:1px;height:60px;background:#dcdcdc;"></div>
<svg class="s" style="left:1258px;top:113px;" width="36" height="36" viewBox="0 0 36 36"><path d="M14.5 11 A10 10 0 1 0 23 25" fill="none" stroke="#5a5a5a" stroke-width="1.1"/><path d="M14.5 19 V2.5 H32.5 V15 M14.5 19 H25" fill="none" stroke="#444" stroke-width="1.2"/><rect x="31.5" y="15" width="2.5" height="2.5" fill="#fff" stroke="#444" stroke-width="0.8"/><path d="M18.5 8.5 L21 10.5" stroke="#555" stroke-width="1"/><path d="M29.5 21 V33 M23.5 27 H35.5 M25.5 23 L33.5 31 M33.5 23 L25.5 31" stroke="#e08a1e" stroke-width="1.2"/></svg>
<div class="t" style="left:1262px;top:151.8px;font-size:12px;color:#111;-webkit-text-stroke:0.3px #111;">Block</div>
<div class="t" style="left:1255.5px;top:164.8px;font-size:12px;color:#111;-webkit-text-stroke:0.3px #111;">erstellen</div>
<div class="t" style="left:1253px;top:190.5px;font-size:10px;color:#6e6e6e;font-weight:bold;-webkit-text-stroke:0.2px #6e6e6e;">BLOCK</div>
<svg class="s" style="left:1294px;top:193px;" width="9" height="5" viewBox="0 0 9 5"><path d="M0.5 0.5 L4.5 4.5 L8.5 0.5" fill="none" stroke="#aaa" stroke-width="1"/></svg>
<div class="r" style="left:1306px;top:128px;width:1px;height:60px;background:#dcdcdc;"></div>
<svg class="s" style="left:1337px;top:118px;" width="30" height="27" viewBox="0 0 30 27"><path d="M2 8.5 L13 3.5 L21 14 L13 24.5Z" fill="#f8efe0" stroke="#d08a20" stroke-width="1.2"/><path d="M4.5 12 L17.5 10 L21 14 L13 24.5Z" fill="#f0c070"/><path d="M13 3.5 L16 2 L23 11.5 L21 14" fill="#e8e8e8" stroke="#555" stroke-width="1.2"/><path d="M19 7 L26.5 1.5 L28 3.5 L21.5 9" fill="#fff" stroke="#555" stroke-width="1.2"/></svg>
<div class="t" style="left:1313.5px;top:158.8px;font-size:12px;color:#111;letter-spacing:-0.1px;-webkit-text-stroke:0.3px #111;">Eigenschaften</div>
<svg class="s" style="left:1347.5px;top:180.5px;" width="7" height="4" viewBox="0 0 7 4"><path d="M0 0 H7 L3.5 3.5Z" fill="#111"/></svg>
<div class="t" style="left:1310.5px;top:190.5px;font-size:10px;color:#6e6e6e;font-weight:bold;letter-spacing:0.2px;-webkit-text-stroke:0.2px #6e6e6e;">EIGENSCH...</div>
<svg class="s" style="left:1384px;top:193px;" width="9" height="5" viewBox="0 0 9 5"><path d="M0.5 0.5 L4.5 4.5 L8.5 0.5" fill="none" stroke="#aaa" stroke-width="1"/></svg>
<div class="r" style="left:1396px;top:128px;width:1px;height:60px;background:#dcdcdc;"></div>
<svg class="s" style="left:1414px;top:125px;" width="34" height="11" viewBox="0 0 34 11"><rect x="1" y="1" width="32" height="8.5" fill="#f5dca0" stroke="#d08a20" stroke-width="1.3"/><path d="M5 1 V4.5 M8 1 V3.5 M11 1 V4.5 M14 1 V3.5 M17 1 V4.5 M20 1 V3.5 M23 1 V4.5 M26 1 V3.5 M29 1 V4.5" stroke="#d08a20" stroke-width="1"/></svg>
<div class="t" style="left:1403px;top:158.8px;font-size:12px;color:#111;letter-spacing:0.1px;-webkit-text-stroke:0.3px #111;">Hilfsmittel</div>
<svg class="s" style="left:1427.0px;top:180.5px;" width="7" height="4" viewBox="0 0 7 4"><path d="M0 0 H7 L3.5 3.5Z" fill="#111"/></svg>
<div class="t" style="left:1400px;top:190.5px;font-size:10px;color:#6e6e6e;font-weight:bold;letter-spacing:0.3px;-webkit-text-stroke:0.2px #6e6e6e;">HILFS...</div>
<svg class="s" style="left:1452px;top:193px;" width="9" height="5" viewBox="0 0 9 5"><path d="M0.5 0.5 L4.5 4.5 L8.5 0.5" fill="none" stroke="#aaa" stroke-width="1"/></svg>
<div class="r" style="left:1464px;top:128px;width:1px;height:60px;background:#dcdcdc;"></div>
<svg class="s" style="left:1492px;top:112px;" width="38" height="38" viewBox="0 0 38 38"><rect x="2.5" y="2.5" width="11" height="11" fill="none" stroke="#1f6fe0" stroke-width="1.3"/><rect x="5" y="5" width="6" height="6" fill="#1f6fe0"/><rect x="22.5" y="2.5" width="11" height="11" fill="none" stroke="#1f6fe0" stroke-width="1.3"/><rect x="25" y="25" width="0" height="0"/><rect x="25" y="5" width="6" height="6" fill="#1f6fe0"/><rect x="2.5" y="22.5" width="11" height="11" fill="none" stroke="#1f6fe0" stroke-width="1.3"/><rect x="5" y="25" width="6" height="6" fill="#1f6fe0"/><path d="M28 17.5 A5 5 0 0 1 31.5 26 L30.5 28 H25.5 L24.5 26 A5 5 0 0 1 28 17.5Z" fill="#f5d08a" stroke="#d08a20" stroke-width="1"/><path d="M26 30 H30 M26.5 32 H29.5" stroke="#444" stroke-width="1.4"/></svg>
<div class="t" style="left:1471px;top:158.8px;font-size:12px;color:#111;letter-spacing:-0.1px;-webkit-text-stroke:0.3px #111;">Steuerelement</div>
<svg class="s" style="left:1505.5px;top:180.5px;" width="7" height="4" viewBox="0 0 7 4"><path d="M0 0 H7 L3.5 3.5Z" fill="#111"/></svg>
<div class="t" style="left:1468px;top:190.5px;font-size:10px;color:#6e6e6e;font-weight:bold;letter-spacing:0.35px;-webkit-text-stroke:0.2px #6e6e6e;">STEUERELEM...</div>
<div class="r" style="left:0px;top:110px;width:18px;height:100px;background:#e1e1e1;"></div>
<div class="r" style="left:5px;top:139.0px;width:2px;height:2px;background:#333;"></div>
<div class="r" style="left:5px;top:142.5px;width:2px;height:2px;background:#333;"></div>
<div class="r" style="left:5px;top:146.0px;width:2px;height:2px;background:#333;"></div>
<div class="r" style="left:5px;top:149.5px;width:2px;height:2px;background:#333;"></div>
<div class="r" style="left:5px;top:153.0px;width:2px;height:2px;background:#333;"></div>
<div class="r" style="left:5px;top:156.5px;width:2px;height:2px;background:#333;"></div>
<div class="r" style="left:0px;top:216px;width:8px;height:1px;background:#f4f4f4;"></div>
<div class="r" style="left:47px;top:222px;width:1506px;height:17px;background:#f0f0f0;"></div>
<div class="r" style="left:48px;top:222.5px;width:67px;height:15.5px;background:#dadada;"></div>
<div class="t" style="left:60px;top:224.7px;font-size:11px;color:#222;letter-spacing:-0.2px;">Start</div>
<svg class="s" style="left:100px;top:226px;" width="9" height="9" viewBox="0 0 9 9"><path d="M0.5 0.5 L8.5 8.5 M8.5 0.5 L0.5 8.5" stroke="#777" stroke-width="1.4"/></svg>
<div class="r" style="left:117px;top:222.5px;width:207px;height:15.5px;background:#dadada;"></div>
<div class="t" style="left:140px;top:224.7px;font-size:11px;color:#333;letter-spacing:-0.27px;">PRH_2Profile-3Horizonte_01*</div>
<svg class="s" style="left:309px;top:226px;" width="9" height="9" viewBox="0 0 9 9"><path d="M0.5 0.5 L8.5 8.5 M8.5 0.5 L0.5 8.5" stroke="#777" stroke-width="1.4"/></svg>
<div class="r" style="left:324px;top:222.5px;width:210px;height:15.5px;background:#f2f2f2;"></div>
<div class="t" style="left:336px;top:224.3px;font-size:12px;color:#000;font-weight:bold;letter-spacing:-0.03px;">PRH_2Profile-3Horizonte_02*</div>
<svg class="s" style="left:517px;top:226px;" width="6" height="10" viewBox="0 0 6 10"><path d="M0.8 0.8 L4.8 5 L0.8 9.2" fill="none" stroke="#666" stroke-width="1.5"/></svg>
<div class="r" style="left:15.0px;top:225px;width:2px;height:2px;background:#333;"></div>
<div class="r" style="left:18.5px;top:225px;width:2px;height:2px;background:#333;"></div>
<div class="r" style="left:22.0px;top:225px;width:2px;height:2px;background:#333;"></div>
<div class="r" style="left:25.5px;top:225px;width:2px;height:2px;background:#333;"></div>
<div class="r" style="left:29.0px;top:225px;width:2px;height:2px;background:#333;"></div>
<div class="r" style="left:32.5px;top:225px;width:2px;height:2px;background:#333;"></div>
<svg class="s" style="left:10px;top:238px;" width="30" height="32" viewBox="0 0 30 32"><defs><linearGradient id="spk" x1="0" y1="0" x2="1" y2="1"><stop offset="0" stop-color="#4a7cf0"/><stop offset="1" stop-color="#c070e0"/></linearGradient></defs><path d="M12 6.5 H5 A3.5 3.5 0 0 0 1.5 10 V21 A3.5 3.5 0 0 0 5 24.5 H5.5 V29.5 L13 24.5 H21.5 A3.5 3.5 0 0 0 25 21 V19.5" fill="none" stroke="#111" stroke-width="1.5"/><path d="M21 3 Q22 9 28.5 10 Q22 11 21 17.5 Q20 11 13.5 10 Q20 9 21 3Z" fill="url(#spk)"/><path d="M15.5 1.5 Q15.9 3.4 18 3.9 Q15.9 4.4 15.5 6.5 Q15.1 4.4 13 3.9 Q15.1 3.4 15.5 1.5Z" fill="#6a80f0"/><path d="M26 13.5 Q26.4 15.5 28.5 16 Q26.4 16.5 26 18.5 Q25.6 16.5 23.5 16 Q25.6 15.5 26 13.5Z" fill="#b07ce0"/></svg>
<svg class="s" style="left:9px;top:289px;" width="30" height="32" viewBox="0 0 30 32"><defs><linearGradient id="flt" x1="0" y1="0" x2="0" y2="1"><stop offset="0" stop-color="#ffffff"/><stop offset="1" stop-color="#cfd5db"/></linearGradient></defs><path d="M2 2.5 H27.5 L18 15 V29.5 L12.5 24 V15Z" fill="url(#flt)" stroke="#333" stroke-width="1.4" stroke-linejoin="round"/></svg>
<div class="r" style="left:1567.0px;top:225px;width:2px;height:2px;background:#333;"></div>
<div class="r" style="left:1570.5px;top:225px;width:2px;height:2px;background:#333;"></div>
<div class="r" style="left:1574.0px;top:225px;width:2px;height:2px;background:#333;"></div>
<div class="r" style="left:1577.5px;top:225px;width:2px;height:2px;background:#333;"></div>
<div class="r" style="left:1581.0px;top:225px;width:2px;height:2px;background:#333;"></div>
<div class="r" style="left:1584.5px;top:225px;width:2px;height:2px;background:#333;"></div>
<svg class="s" style="left:1565px;top:242px;" width="22" height="26" viewBox="0 0 22 26"><path d="M6 16 A9 9 0 1 1 16 16 L14.5 19 H7.5Z" fill="none" stroke="#444" stroke-width="1.2"/><path d="M7.5 20.5 H14.5 M8 22.5 H14 M8.5 24.5 H13.5" stroke="#444" stroke-width="1.1"/></svg>
<svg class="s" style="left:1563px;top:293px;" width="27" height="22" viewBox="0 0 27 22"><path d="M1 5 H26 M1 18.5 H26" stroke="#333" stroke-width="1.4"/><circle cx="7.5" cy="5" r="2.6" fill="#e1e1e1" stroke="#333" stroke-width="1.3"/><circle cx="18.5" cy="18.5" r="2.6" fill="#e1e1e1" stroke="#333" stroke-width="1.3"/></svg>
<svg class="s" style="left:1569px;top:342px;" width="14" height="27" viewBox="0 0 14 27"><path d="M8.5 8 V19 A2 2 0 0 1 4.5 19 V5.5 A4 4 0 0 1 12.5 5.5 V20 A5.5 5.5 0 0 1 1.5 20 V9" fill="none" stroke="#444" stroke-width="1.2"/></svg>
<svg class="s" style="left:1564px;top:392px;" width="26" height="26" viewBox="0 0 26 26"><path d="M3 17 L13 3 A3 3 0 0 1 18 4.5 L9 20 M9 20 A4 4 0 1 1 3 17 M12 22.5 H23.5 V6 L17 9" fill="none" stroke="#444" stroke-width="1.3"/><path d="M21 12 V20 H15Z" fill="none" stroke="#444" stroke-width="1.3"/><circle cx="6" cy="20" r="1.5" fill="none" stroke="#444"/></svg>
<svg class="s" style="left:1565px;top:442px;" width="24" height="26" viewBox="0 0 24 26"><rect x="2" y="1.5" width="7.5" height="7" fill="none" stroke="#444" stroke-width="1.2"/><rect x="14" y="1.5" width="7.5" height="7" fill="none" stroke="#444" stroke-width="1.2"/><rect x="2" y="13" width="7.5" height="7" fill="none" stroke="#444" stroke-width="1.2"/><rect x="14" y="13" width="7.5" height="7" fill="none" stroke="#444" stroke-width="1.2"/><path d="M2 11 H9.5 M14 11 H21.5 M2 23 H9.5 M14 23 H21.5" stroke="#444" stroke-width="1.1"/></svg>
<svg class="s" style="left:1564px;top:492px;" width="24" height="26" viewBox="0 0 24 26"><path d="M11.5 18 C4 14 1 10 1 8 A10.5 7.5 0 0 1 22 8 C22 10 19 14 11.5 18 Z" fill="none" stroke="#444" stroke-width="1.2"/><path d="M11.5 18 C7 12 6 6 11.5 1 C17 6 16 12 11.5 18 M11.5 1 V18" fill="none" stroke="#444" stroke-width="1.1"/><rect x="9" y="19.5" width="5" height="4" fill="none" stroke="#444" stroke-width="1.1"/></svg>
<svg class="s" style="left:1563px;top:544px;" width="27" height="22" viewBox="0 0 27 22"><path d="M6 19.5 A4.5 4.5 0 0 1 4.5 11 A5 5 0 0 1 9 6 A7 7 0 0 1 21 8 A5.5 5.5 0 0 1 21 19.5Z" fill="none" stroke="#444" stroke-width="1.3"/><path d="M11 16 V10 M9 12 L11 10 L13 12 M15.5 10 V16 M13.5 14 L15.5 16 L17.5 14" fill="none" stroke="#444" stroke-width="1.2"/></svg>
<div class="r" style="left:47px;top:460px;width:1506px;height:1px;background:#2a8a8a;"></div>
<div class="r" style="left:869px;top:717px;width:1px;height:76px;background:#e8609a;"></div>
<div class="t" style="left:1093.5px;top:357.8px;font-size:31.5px;color:#00ff00;letter-spacing:-0.3px;">2022</div>
<div class="t" style="left:1093.5px;top:391.3px;font-size:31.5px;color:#ff0000;letter-spacing:-0.3px;">2023</div>
<div class="t" style="left:1093.5px;top:424.8px;font-size:31.5px;color:#0000ff;letter-spacing:-0.3px;">2024</div>
<svg class="s" style="left:105px;top:652px;" width="85" height="82" viewBox="0 0 85 82"><path d="M13.5 21 V50.5" stroke="#111" stroke-width="1.1"/><path d="M13.5 50.5 H33.5 M13.5 70.5 H33.5" stroke="#f07070" stroke-width="1.1"/><path d="M13.5 50.5 V70.5 M33.5 50.5 V70.5" stroke="#10a050" stroke-width="1.1"/><path d="M33.5 70.5 H63" stroke="#111" stroke-width="1.1"/><path d="M9 6.5 L13.5 11 L18 6.5 M13.5 11 V16" fill="none" stroke="#10a050" stroke-width="1.1"/><path d="M69 65 L77.5 76 M77.5 65 L69 76" stroke="#ff6060" stroke-width="1.1"/><path d="M20.5 55.5 L23 66 L26 58 L29 66 L31.5 55.5" fill="none" stroke="#111" stroke-width="1.1"/></svg>
<svg class="s" style="left:1413.7px;top:259.4px;" width="120" height="120" viewBox="0 0 120 120"><circle cx="60" cy="60" r="53" fill="none" stroke="#cdd0d4" stroke-width="12.8"/></svg>
<div class="r" style="left:1453px;top:299px;width:42px;height:42px;background:#efefef;border:1px solid #9a9a9a;box-sizing:border-box;border-radius:2px;"></div>
<div class="r" style="left:1454px;top:330px;width:10px;height:10px;background:#b4e2f6;"></div>
<div class="t" style="left:1460.5px;top:315.1px;font-size:14px;color:#d8d8d8;font-weight:bold;letter-spacing:-1.6px;-webkit-text-stroke:2.6px #222;paint-order:stroke fill;">TOP</div>
<svg class="s" style="left:47px;top:799px;" width="7" height="7" viewBox="0 0 7 7"><path d="M0.5 0.5 L6 6 M6 0.5 L0.5 6" stroke="#888" stroke-width="1.6"/></svg>
<div class="r" style="left:50px;top:818.0px;width:2px;height:2px;background:#222;"></div>
<div class="r" style="left:50px;top:821.4px;width:2px;height:2px;background:#222;"></div>
<div class="r" style="left:50px;top:824.8px;width:2px;height:2px;background:#222;"></div>
<div class="r" style="left:50px;top:828.2px;width:2px;height:2px;background:#222;"></div>
<div class="r" style="left:50px;top:831.6px;width:2px;height:2px;background:#222;"></div>
<div class="r" style="left:50px;top:835.0px;width:2px;height:2px;background:#222;"></div>
<div class="t" style="left:61px;top:809.1px;font-size:11.65px;color:#f2f2f2;letter-spacing:-0.02px;font-family:'Liberation Mono';">-------------------------------------------------------------</div>
<div class="t" style="left:60px;top:824.1px;font-size:11.65px;color:#f4f4f4;font-family:'Liberation Mono';">mit ENTER zurück ins Dialogfenster.&lt;Ortho aus&gt;</div>
<div class="r" style="left:1544.5px;top:815px;width:1.5px;height:17px;background:#858585;"></div>
<svg class="s" style="left:11px;top:879px;" width="11" height="11" viewBox="0 0 11 11"><path d="M0 1.5 H11 M0 5.5 H11 M0 9.5 H11" stroke="#444" stroke-width="1.1"/></svg>
<div class="r" style="left:31px;top:872px;width:74px;height:24px;background:#f2f2f2;"></div>
<svg class="s" style="left:42px;top:876px;" width="15" height="14" viewBox="0 0 15 14"><rect x="0.6" y="0.6" width="13.8" height="12.8" fill="none" stroke="#555" stroke-width="1.1"/><path d="M3.5 3 V10 H11" fill="none" stroke="#777" stroke-width="0.9" stroke-dasharray="1.5 1"/></svg>
<div class="t" style="left:62px;top:879.8px;font-size:12px;color:#111;letter-spacing:-0.2px;-webkit-text-stroke:0.35px #111;">Model</div>
<div class="t" style="left:111px;top:879.8px;font-size:12px;color:#333;letter-spacing:-0.4px;-webkit-text-stroke:0.35px #333;">Layout1</div>
<div class="r" style="left:157px;top:873px;width:1px;height:22px;background:#c8c8c8;"></div>
<div class="t" style="left:163px;top:879.8px;font-size:12px;color:#333;letter-spacing:-0.4px;-webkit-text-stroke:0.35px #333;">Layout2</div>
<svg class="s" style="left:214px;top:877px;" width="14" height="14" viewBox="0 0 14 14"><path d="M7 0 V14 M0 7 H14" stroke="#555" stroke-width="1.2"/></svg>
<div class="t" style="left:304px;top:879.8px;font-size:12px;color:#222;letter-spacing:-0.65px;-webkit-text-stroke:0.35px #222;">68837.71, 36157.05, 0.00</div>
<svg class="s" style="left:435px;top:877px;" width="16" height="16" viewBox="0 0 16 16"><rect x="0.6" y="0.6" width="15" height="13.5" fill="none" stroke="#555" stroke-width="1.1"/><path d="M3.5 3 V10.5 H12" fill="none" stroke="#777" stroke-width="0.9"/></svg>
<div class="t" style="left:455px;top:880.3px;font-size:11.5px;color:#222;letter-spacing:-0.6px;-webkit-text-stroke:0.35px #222;">MODEL</div>
<svg class="s" style="left:502px;top:877px;" width="16" height="16" viewBox="0 0 16 16"><path d="M8 1 V9 L2 14 M8 9 L14 14 M5.5 3.5 L8 1 L10.5 3.5" fill="none" stroke="#1f6fe0" stroke-width="1.4"/></svg>
<div class="t" style="left:522px;top:879.8px;font-size:12px;color:#222;letter-spacing:-0.2px;-webkit-text-stroke:0.35px #222;">1:1</div>
<svg class="s" style="left:547px;top:877px;" width="15" height="15" viewBox="0 0 15 15"><path d="M4 0 V15 M10 0 V15 M0 4 H14 M0 10 H14" stroke="#444" stroke-width="1.3"/></svg>
<div class="t" style="left:567px;top:880.3px;font-size:11.5px;color:#222;letter-spacing:-1.0px;-webkit-text-stroke:0.35px #222;">RASTER</div>
<svg class="s" style="left:618px;top:877px;" width="15" height="15" viewBox="0 0 15 15"><path d="M4 0 V15 M10 0 V15 M0 4 H14 M0 10 H14" stroke="#999" stroke-width="1.1"/><rect x="5" y="5" width="4" height="4" fill="none" stroke="#e02020" stroke-width="1"/></svg>
<div class="t" style="left:637px;top:880.3px;font-size:11.5px;color:#222;letter-spacing:-0.5px;-webkit-text-stroke:0.35px #222;">FANG</div>
<svg class="s" style="left:675px;top:877px;" width="16" height="16" viewBox="0 0 16 16"><path d="M1.5 1 V13.5 H14" fill="none" stroke="#e03030" stroke-width="1.2"/><path d="M1.5 1 V13.5" stroke="#2aa02a" stroke-width="1.2"/><path d="M1.5 8 H6.5 V13.5" fill="none" stroke="#555" stroke-width="1.1"/></svg>
<div class="t" style="left:694.5px;top:880.3px;font-size:11.5px;color:#222;letter-spacing:-0.55px;-webkit-text-stroke:0.35px #222;">ORTHO</div>
<svg class="s" style="left:743px;top:877px;" width="15" height="15" viewBox="0 0 15 15"><circle cx="7" cy="8.5" r="6" fill="none" stroke="#555" stroke-width="1.2"/><path d="M7 8.5 L13 2" stroke="#555" stroke-width="1.3"/></svg>
<div class="t" style="left:761px;top:880.3px;font-size:11.5px;color:#222;letter-spacing:-0.55px;-webkit-text-stroke:0.35px #222;">POLAR</div>
<svg class="s" style="left:807px;top:877px;" width="16" height="16" viewBox="0 0 16 16"><path d="M1.5 13.5 L14 1 M1 14 H14" stroke="#e03030" stroke-width="1"/><path d="M1.5 13.5 L14 1" stroke="#555" stroke-width="1"/><circle cx="2" cy="13.5" r="1.3" fill="#e03030"/></svg>
<div class="t" style="left:826px;top:880.3px;font-size:11.5px;color:#222;letter-spacing:-0.55px;-webkit-text-stroke:0.35px #222;">OSPUR</div>
<svg class="s" style="left:874px;top:877px;" width="14" height="16" viewBox="0 0 14 16"><path d="M2 15 V7 A5 5 0 0 1 12 7 V15" fill="none" stroke="#e02030" stroke-width="2.6"/><path d="M1 12 H3.5 M10.5 12 H13" stroke="#555" stroke-width="1.2"/></svg>
<div class="t" style="left:893px;top:880.3px;font-size:11.5px;color:#222;letter-spacing:-0.55px;-webkit-text-stroke:0.35px #222;">2D-OFANG</div>
<svg class="s" style="left:955px;top:877px;" width="17" height="16" viewBox="0 0 17 16"><path d="M2 10 A6.5 6.5 0 0 1 14 6" fill="none" stroke="#1f6fe0" stroke-width="3.2"/><path d="M11 9 L16 13 L10 15Z" fill="#555"/></svg>
<div class="t" style="left:976px;top:880.3px;font-size:11.5px;color:#222;letter-spacing:-0.55px;-webkit-text-stroke:0.35px #222;">3D-OFANG</div>
<svg class="s" style="left:1039px;top:877px;" width="16" height="16" viewBox="0 0 16 16"><path d="M3 0 V5 M0.5 2.5 H5.5" stroke="#444" stroke-width="1"/><path d="M3 6 V10.5 H15" fill="none" stroke="#444" stroke-width="1.1"/><rect x="5" y="9" width="10" height="5" fill="none" stroke="#444" stroke-width="1.1"/></svg>
<div class="t" style="left:1059px;top:880.3px;font-size:11.5px;color:#222;letter-spacing:-0.4px;-webkit-text-stroke:0.35px #222;">DYN</div>
<svg class="s" style="left:1089px;top:877px;" width="17" height="16" viewBox="0 0 17 16"><path d="M3 0 V5 M0.5 2.5 H5.5" stroke="#444" stroke-width="1"/><rect x="5" y="5" width="11" height="10" fill="none" stroke="#444" stroke-width="1.1"/><path d="M7 8 H14 M7 10.5 H14 M7 13 H14" stroke="#444" stroke-dasharray="1.3 1" stroke-width="1"/></svg>
<div class="t" style="left:1110px;top:880.3px;font-size:11.5px;color:#222;letter-spacing:-0.5px;-webkit-text-stroke:0.35px #222;">QUAD</div>
<svg class="s" style="left:1152px;top:877px;" width="12" height="16" viewBox="0 0 12 16"><path d="M6 1 A5 5 0 0 1 10 9.5 L9 11 H3 L2 9.5 A5 5 0 0 1 6 1Z" fill="none" stroke="#666" stroke-width="1.1"/><path d="M3.5 12.5 H8.5 M4 14.3 H8" stroke="#666" stroke-width="1.1"/></svg>
<div class="t" style="left:1170px;top:880.3px;font-size:11.5px;color:#222;letter-spacing:-1.1px;-webkit-text-stroke:0.35px #222;">VERDECKT</div>
<div class="r" style="left:1229.5px;top:874px;width:41.5px;height:20px;background:#c9def8;border:1px solid #3c82e0;box-sizing:border-box;border-radius:3px;"></div>
<svg class="s" style="left:1233px;top:878px;" width="16" height="16" viewBox="0 0 16 16"><path d="M1 6 L8 1 L15 6 L8 11Z M1 9 L8 14" fill="none" stroke="#444" stroke-width="1.1"/><path d="M9 8 L14 11.5 L12 12 L13.5 14.5 L12.5 15 L11 12.5 L9.5 14Z" fill="#fff" stroke="#333" stroke-width="0.8"/></svg>
<div class="t" style="left:1253px;top:880.3px;font-size:11.5px;color:#222;letter-spacing:-0.3px;-webkit-text-stroke:0.35px #222;">AB</div>
<svg class="s" style="left:1279px;top:877px;" width="15" height="15" viewBox="0 0 15 15"><rect x="0.6" y="0.6" width="13" height="13.5" fill="none" stroke="#444" stroke-width="1.1"/><path d="M0.6 4 H13.6 M4 4 V14" stroke="#444" stroke-width="1.1"/><path d="M3 2.3 H4 M5.5 2.3 H6.5 M8 2.3 H9 M10.5 2.3 H11.5" stroke="#444" stroke-width="1"/></svg>
<div class="t" style="left:1296px;top:879.8px;font-size:12px;color:#222;letter-spacing:-0.1px;-webkit-text-stroke:0.35px #222;">2D-Konstruieren (Mod</div>
<svg class="s" style="left:1424px;top:880px;" width="9" height="5" viewBox="0 0 9 5"><path d="M0.5 0.5 L4.5 4.5 L8.5 0.5" fill="none" stroke="#888" stroke-width="1"/></svg>
<svg class="s" style="left:1450px;top:877px;" width="16" height="16" viewBox="0 0 16 16"><path d="M4 5.5 V1 H12 V5.5 M1 5.5 H15 V12 H12.5 M1 5.5 V12 H3.5" fill="none" stroke="#444" stroke-width="1.1"/><rect x="3.5" y="9" width="9" height="6" fill="#fff" stroke="#444" stroke-width="1.1"/></svg>
<div class="t" style="left:1470px;top:880.3px;font-size:11.5px;color:#222;letter-spacing:-0.55px;-webkit-text-stroke:0.35px #222;">PUBLIZIEREN</div>
<svg class="s" style="left:1547px;top:875px;" width="16" height="16" viewBox="0 0 16 16"><path d="M2 12 H14 L12.5 10 V6.5 A4.5 4.5 0 0 0 3.5 6.5 V10Z" fill="none" stroke="#555" stroke-width="1.1"/><path d="M6.5 14 H9.5" stroke="#555" stroke-width="1.1"/><circle cx="12.5" cy="3" r="2.6" fill="#ff2020"/></svg>
<div class="r" style="left:1580px;top:879px;width:2.5px;height:2.5px;background:#333;border-radius:1.2px;"></div>
<div class="r" style="left:1580px;top:884px;width:2.5px;height:2.5px;background:#333;border-radius:1.2px;"></div>
<div class="r" style="left:1580px;top:889px;width:2.5px;height:2.5px;background:#333;border-radius:1.2px;"></div>
<div class="r" style="left:522px;top:180px;width:555.5px;height:539px;background:#f0f0f0;border:1px solid #b8b8b8;box-sizing:border-box;border-radius:8px;box-shadow:0 1px 4px rgba(0,0,0,0.12);"></div>
<div class="r" style="left:523px;top:181px;width:553.5px;height:29px;background:#f3f3f3;border-radius:8px 8px 0 0;"></div>
<div class="t" style="left:531.5px;top:189.8px;font-size:12px;color:#111;letter-spacing:0.1px;">Horizonte</div>
<svg class="s" style="left:1057px;top:190px;" width="10" height="10" viewBox="0 0 10 10"><path d="M0.5 0.5 L9.5 9.5 M9.5 0.5 L0.5 9.5" stroke="#222" stroke-width="1.2"/></svg>
<div class="r" style="left:528px;top:220px;width:543.5px;height:464px;border:1px solid #dcdcdc;box-sizing:border-box;"></div>
<div class="r" style="left:534px;top:214px;width:72px;height:10px;background:#f0f0f0;"></div>
<div class="t" style="left:536.5px;top:215.7px;font-size:11px;color:#111;letter-spacing:-0.25px;">Eigenschaften</div>
<div class="r" style="left:539px;top:241.5px;width:12.5px;height:12.5px;background:#fbfbfb;border:1px solid #333;box-sizing:border-box;border-radius:2.5px;"></div>
<div class="t" style="left:554.5px;top:242.7px;font-size:11px;color:#111;letter-spacing:-0.26px;">Name abweichend vom Layernamen</div>
<div class="t" style="left:757.3px;top:242.7px;font-size:11px;color:#111;letter-spacing:-0.1px;">Layerfarbe für Horizontlayer</div>
<div class="r" style="left:1027px;top:235px;width:30px;height:26px;background:#ff0000;"></div>
<div class="t" style="left:537.5px;top:274.2px;font-size:11px;color:#111;letter-spacing:-0.25px;">Layername</div>
<div class="r" style="left:666px;top:269.5px;width:151.5px;height:20.5px;background:#ffffff;border:1px solid #646464;box-sizing:border-box;"></div>
<div class="r" style="left:671px;top:272px;width:24.5px;height:12.5px;background:#0078d7;"></div>
<div class="t" style="left:671px;top:274.2px;font-size:11px;color:#ffffff;letter-spacing:-0.3px;">2023</div>
<div class="t" style="left:820.3px;top:273.7px;font-size:11px;color:#9a9a9a;letter-spacing:-0.3px;">Name</div>
<div class="r" style="left:909.2px;top:269.3px;width:151.5px;height:20.5px;background:#f0f0f0;border:1px solid #6a6a6a;box-sizing:border-box;"></div>
<div class="t" style="left:913px;top:273.2px;font-size:11px;color:#8a8a8a;letter-spacing:-0.2px;">2025</div>
<div class="t" style="left:535.5px;top:303.2px;font-size:11px;color:#111;letter-spacing:-0.31px;">Punktblockliste (Mehrfachauswahl mit STRG+UMSCHALT)</div>
<div class="r" style="left:536px;top:315px;width:528.5px;height:311px;background:#ffffff;border:1px solid #646464;box-sizing:border-box;"></div>
<div class="t" style="left:538.5px;top:320.2px;font-size:11px;color:#111;letter-spacing:0.04px;">PNR = 230605202 | Höhe = 1.570 | HzAbstand: +0.025 | Station: 5.536</div>
<div class="t" style="left:538.5px;top:337.2px;font-size:11px;color:#111;letter-spacing:0.04px;">PNR = 230605203 | Höhe = 1.365 | HzAbstand: +0.024 | Station: 6.542</div>
<div class="t" style="left:538.5px;top:354.2px;font-size:11px;color:#111;letter-spacing:0.04px;">PNR = 230605204 | Höhe = 1.235 | HzAbstand: +0.063 | Station: 7.628</div>
<div class="t" style="left:538.5px;top:371.2px;font-size:11px;color:#111;letter-spacing:0.04px;">PNR = 230605205 | Höhe = 1.081 | HzAbstand: +0.036 | Station: 8.528</div>
<div class="t" style="left:538.5px;top:388.2px;font-size:11px;color:#111;letter-spacing:0.04px;">PNR = 230605206 | Höhe = 0.991 | HzAbstand: +0.049 | Station: 9.163</div>
<div class="r" style="left:537px;top:402.0px;width:525px;height:16.5px;background:#a3a3a3;"></div>
<div class="t" style="left:538.5px;top:405.2px;font-size:11px;color:#f4f4f4;letter-spacing:0.04px;">PNR = 230605207 | Höhe = 0.932 | HzAbstand: +0.056 | Station: 10.543</div>
<div class="t" style="left:538.5px;top:422.2px;font-size:11px;color:#111;letter-spacing:0.04px;">PNR = 230605208 | Höhe = 0.917 | HzAbstand: +0.067 | Station: 11.528</div>
<div class="t" style="left:538.5px;top:439.2px;font-size:11px;color:#111;letter-spacing:0.04px;">PNR = 230605209 | Höhe = 0.751 | HzAbstand: +0.088 | Station: 12.542</div>
<div class="t" style="left:538.5px;top:456.2px;font-size:11px;color:#111;letter-spacing:0.04px;">PNR = 230605210 | Höhe = 0.650 | HzAbstand: +0.093 | Station: 13.533</div>
<div class="t" style="left:538.5px;top:473.2px;font-size:11px;color:#111;letter-spacing:0.04px;">PNR = 230605211 | Höhe = 0.577 | HzAbstand: +0.283 | Station: 14.529</div>
<div class="t" style="left:538.5px;top:490.2px;font-size:11px;color:#111;letter-spacing:0.04px;">PNR = 230605212 | Höhe = 0.555 | HzAbstand: -0.276 | Station: 15.534</div>
<div class="r" style="left:643.2px;top:631.5px;width:84px;height:20.5px;background:#fdfdfd;border:1px solid #c6c6c6;box-sizing:border-box;border-radius:3px;"></div>
<div class="t" style="left:653px;top:636.7px;font-size:11px;color:#111;letter-spacing:-0.15px;"><u>H</u>inzufügen&lt;</div>
<div class="r" style="left:750.3px;top:631.5px;width:126px;height:20.5px;background:#fdfdfd;border:1px solid #c6c6c6;box-sizing:border-box;border-radius:3px;"></div>
<div class="t" style="left:760.5px;top:636.7px;font-size:11px;color:#111;letter-spacing:-0.1px;"><u>L</u>öschen (aus Liste)...</div>
<div class="r" style="left:899px;top:631.5px;width:56.8px;height:20.5px;background:#fdfdfd;border:1px solid #c6c6c6;box-sizing:border-box;border-radius:3px;"></div>
<div class="t" style="left:909px;top:636.7px;font-size:11px;color:#111;letter-spacing:-0.1px;"><u>Z</u>oom&lt;</div>
<div class="t" style="left:537.5px;top:662.7px;font-size:11px;color:#111;letter-spacing:-0.25px;">Punktblockfilter</div>
<div class="r" style="left:631.3px;top:658.5px;width:152px;height:20.3px;background:#ffffff;border:1px solid #646464;box-sizing:border-box;"></div>
<div class="t" style="left:635px;top:662.2px;font-size:11px;color:#111;letter-spacing:-0.25px;">BATPKT</div>
<div class="t" style="left:785.3px;top:662.7px;font-size:11px;color:#111;letter-spacing:-0.1px;">Punktblocklayerfilter</div>
<div class="r" style="left:909.2px;top:658.5px;width:151.5px;height:20.3px;background:#ffffff;border:1px solid #646464;box-sizing:border-box;"></div>
<div class="t" style="left:914px;top:662.2px;font-size:11px;color:#111;letter-spacing:-0.25px;">*-EIN-2023</div>
<div class="r" style="left:731px;top:692px;width:45.6px;height:20.7px;background:#fdfdfd;border:1.5px solid #0067c0;box-sizing:border-box;border-radius:3px;"></div>
<div class="t" style="left:746.5px;top:698.2px;font-size:11px;color:#111;letter-spacing:-0.15px;">OK</div>
<div class="r" style="left:799.3px;top:692px;width:68.3px;height:20.7px;background:#fdfdfd;border:1px solid #c6c6c6;box-sizing:border-box;border-radius:3px;"></div>
<div class="t" style="left:807px;top:698.2px;font-size:11px;color:#111;letter-spacing:-0.3px;">Abbrechen</div>
</body></html>
